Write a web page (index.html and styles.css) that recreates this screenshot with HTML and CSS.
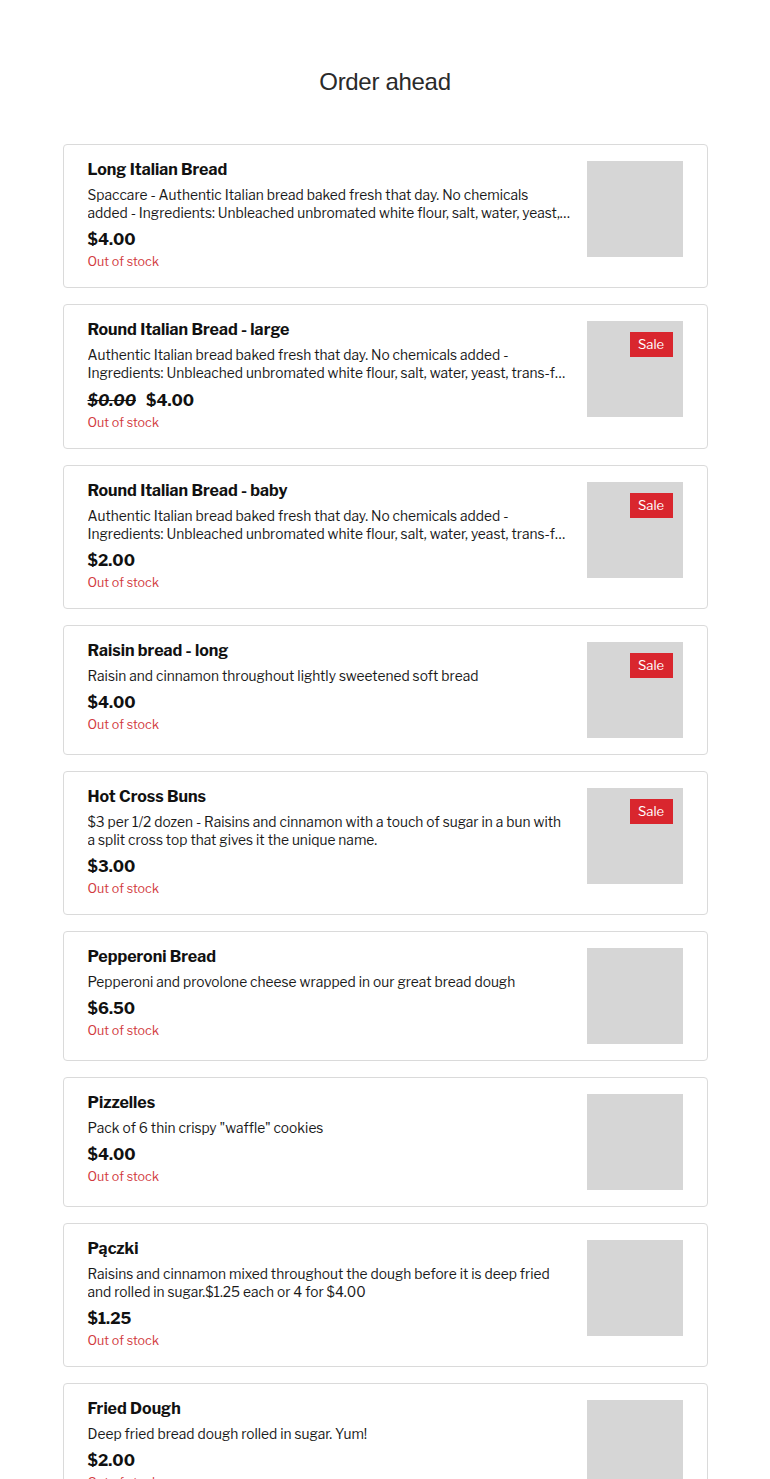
FILE: index.html
```html
<!DOCTYPE html>
<html lang="en">
<head>
<meta charset="utf-8">
<title>Order ahead</title>
<link rel="stylesheet" href="styles.css">
</head>
<body>
<main class="page">
  <h1 class="heading">Order ahead</h1>
  <ul class="list">
    <li class="card">
      <div class="info">
        <h2 class="name">Long Italian Bread</h2>
        <p class="desc">Spaccare - Authentic Italian bread baked fresh that day. No chemicals added - Ingredients: Unbleached unbromated white flour, salt, water, yeast, trans-fat free shortening</p>
        <div class="price"><span>$4.00</span></div>
        <div class="stock">Out of stock</div>
      </div>
      <div class="thumb"></div>
    </li>
    <li class="card">
      <div class="info">
        <h2 class="name">Round Italian Bread - large</h2>
        <p class="desc">Authentic Italian bread baked fresh that day. No chemicals added - Ingredients: Unbleached unbromated white flour, salt, water, yeast, trans-fat free shortening</p>
        <div class="price price-sale"><s class="old">$0.00</s><span>$4.00</span></div>
        <div class="stock">Out of stock</div>
      </div>
      <div class="thumb"><span class="badge">Sale</span></div>
    </li>
    <li class="card">
      <div class="info">
        <h2 class="name">Round Italian Bread - baby</h2>
        <p class="desc">Authentic Italian bread baked fresh that day. No chemicals added - Ingredients: Unbleached unbromated white flour, salt, water, yeast, trans-fat free shortening</p>
        <div class="price"><span>$2.00</span></div>
        <div class="stock">Out of stock</div>
      </div>
      <div class="thumb"><span class="badge">Sale</span></div>
    </li>
    <li class="card">
      <div class="info">
        <h2 class="name">Raisin bread - long</h2>
        <p class="desc">Raisin and cinnamon throughout lightly sweetened soft bread</p>
        <div class="price"><span>$4.00</span></div>
        <div class="stock">Out of stock</div>
      </div>
      <div class="thumb"><span class="badge">Sale</span></div>
    </li>
    <li class="card">
      <div class="info">
        <h2 class="name">Hot Cross Buns</h2>
        <p class="desc">$3 per 1/2 dozen - Raisins and cinnamon with a touch of sugar in a bun with a split cross top that gives it the unique name.</p>
        <div class="price"><span>$3.00</span></div>
        <div class="stock">Out of stock</div>
      </div>
      <div class="thumb"><span class="badge">Sale</span></div>
    </li>
    <li class="card">
      <div class="info">
        <h2 class="name">Pepperoni Bread</h2>
        <p class="desc">Pepperoni and provolone cheese wrapped in our great bread dough</p>
        <div class="price"><span>$6.50</span></div>
        <div class="stock">Out of stock</div>
      </div>
      <div class="thumb"></div>
    </li>
    <li class="card">
      <div class="info">
        <h2 class="name">Pizzelles</h2>
        <p class="desc">Pack of 6 thin crispy "waffle" cookies</p>
        <div class="price"><span>$4.00</span></div>
        <div class="stock">Out of stock</div>
      </div>
      <div class="thumb"></div>
    </li>
    <li class="card">
      <div class="info">
        <h2 class="name">Pączki</h2>
        <p class="desc">Raisins and cinnamon mixed throughout the dough before it is deep fried and rolled in sugar.$1.25 each or 4 for $4.00</p>
        <div class="price"><span>$1.25</span></div>
        <div class="stock">Out of stock</div>
      </div>
      <div class="thumb"></div>
    </li>
    <li class="card">
      <div class="info">
        <h2 class="name">Fried Dough</h2>
        <p class="desc">Deep fried bread dough rolled in sugar. Yum!</p>
        <div class="price"><span>$2.00</span></div>
        <div class="stock">Out of stock</div>
      </div>
      <div class="thumb"></div>
    </li>
  </ul>
</main>
</body>
</html>
```
FILE: styles.css
```css
* { box-sizing: border-box; }
html, body { margin: 0; padding: 0; background: #fff; }
body {
  font-family: "Libre Franklin", "Inter", "Liberation Sans", sans-serif;
  color: #111;
}
.page {
  width: 645px;
  margin: 0 auto;
  padding-top: 65px;
}
.heading {
  margin: 0 0 46px;
  text-align: center;
  font-family: "Liberation Sans", sans-serif;
  font-weight: 400;
  font-size: 24px;
  line-height: 33px;
  color: #2a2a2a;
  letter-spacing: -0.3px;
}
.list {
  list-style: none;
  margin: 0;
  padding: 0;
  display: flex;
  flex-direction: column;
  gap: 16px;
}
.card {
  display: flex;
  gap: 16px;
  border: 1px solid #dadada;
  border-radius: 4px;
  padding: 16px 24px 16px 24px;
  min-height: 130px;
}
.info { flex: 1; min-width: 0; }
.name {
  margin: 0 0 8px;
  font-size: 16px;
  line-height: 17px;
  font-weight: 700;
  color: #111;
}
.desc {
  margin: 0;
  font-size: 13.75px;
  line-height: 18px;
  color: #1a1a1a;
  display: -webkit-box;
  -webkit-line-clamp: 2;
  -webkit-box-orient: vertical;
  overflow: hidden;
}
.price {
  margin-top: 7px;
  font-size: 16px;
  line-height: 22px;
  font-weight: 700;
  display: flex;
  gap: 10px;
}
.price-sale { line-height: 23px; }
.old { font-style: italic; }
.stock {
  margin-top: 1px;
  font-size: 12.5px;
  line-height: 19px;
  color: #d23a40;
}
.thumb {
  position: relative;
  flex: 0 0 96px;
  width: 96px;
  height: 96px;
  background: #d6d6d6;
}
.badge {
  position: absolute;
  top: 11px;
  right: 10px;
  width: 43px;
  height: 25px;
  background: #d9262e;
  color: #fff;
  font-size: 13px;
  line-height: 25px;
  text-align: center;
}
```
